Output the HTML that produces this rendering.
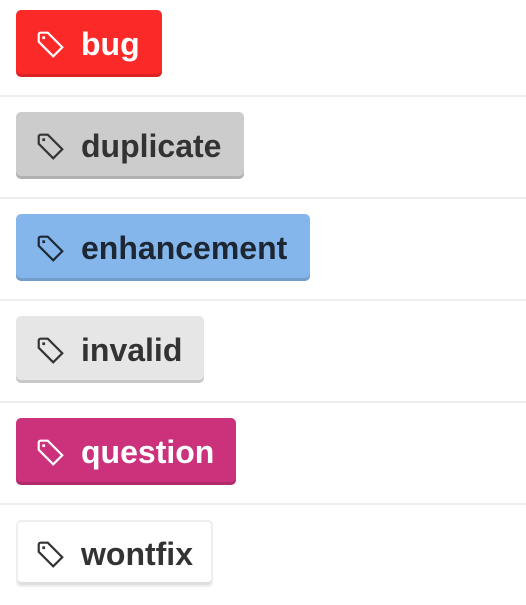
<!DOCTYPE html>
<html><head><style>
body{margin:-5px 0 0 0;background:#fff;width:526px;height:607px;overflow:hidden;font-family:"Liberation Sans",Arial,sans-serif;}
.row{height:100px;border-bottom:2px solid #eee;position:relative;}
.row:last-child{border-bottom:none;}
.b{position:absolute;left:16px;top:15px;height:67px;box-sizing:border-box;border-radius:5px;box-shadow:inset 0 -3px 0 rgba(0,0,0,.13);display:flex;align-items:center;padding:1px 0 0 20px;font-weight:bold;font-size:32px;color:#333;}
.b svg{width:29px;height:29px;margin-right:16px;}
</style></head><body>
<div class="row"><div class="b" style="width:146px;background:#fc2929;color:#fff"><svg viewBox="0 0 16 16" fill="none" stroke="currentColor" stroke-width="1.2"><path d="M1.5 2.5v4l8 8 5-5-8-8h-4a1 1 0 0 0-1 1z"/><rect x="3.5" y="3.5" width="1.5" height="1.5" fill="currentColor" stroke="none"/></svg>bug</div></div>
<div class="row"><div class="b" style="width:228px;background:#ccc"><svg viewBox="0 0 16 16" fill="none" stroke="currentColor" stroke-width="1.2"><path d="M1.5 2.5v4l8 8 5-5-8-8h-4a1 1 0 0 0-1 1z"/><rect x="3.5" y="3.5" width="1.5" height="1.5" fill="currentColor" stroke="none"/></svg>duplicate</div></div>
<div class="row"><div class="b" style="width:294px;background:#84b6eb;color:#1c2733"><svg viewBox="0 0 16 16" fill="none" stroke="currentColor" stroke-width="1.2"><path d="M1.5 2.5v4l8 8 5-5-8-8h-4a1 1 0 0 0-1 1z"/><rect x="3.5" y="3.5" width="1.5" height="1.5" fill="currentColor" stroke="none"/></svg>enhancement</div></div>
<div class="row"><div class="b" style="width:188px;background:#e6e6e6"><svg viewBox="0 0 16 16" fill="none" stroke="currentColor" stroke-width="1.2"><path d="M1.5 2.5v4l8 8 5-5-8-8h-4a1 1 0 0 0-1 1z"/><rect x="3.5" y="3.5" width="1.5" height="1.5" fill="currentColor" stroke="none"/></svg>invalid</div></div>
<div class="row"><div class="b" style="width:220px;background:#cc317c;color:#fff"><svg viewBox="0 0 16 16" fill="none" stroke="currentColor" stroke-width="1.2"><path d="M1.5 2.5v4l8 8 5-5-8-8h-4a1 1 0 0 0-1 1z"/><rect x="3.5" y="3.5" width="1.5" height="1.5" fill="currentColor" stroke="none"/></svg>question</div></div>
<div class="row"><div class="b" style="width:197px;background:#fff;border:2px solid #eee;padding-left:18px"><svg viewBox="0 0 16 16" fill="none" stroke="currentColor" stroke-width="1.2"><path d="M1.5 2.5v4l8 8 5-5-8-8h-4a1 1 0 0 0-1 1z"/><rect x="3.5" y="3.5" width="1.5" height="1.5" fill="currentColor" stroke="none"/></svg>wontfix</div></div>
</body></html>
